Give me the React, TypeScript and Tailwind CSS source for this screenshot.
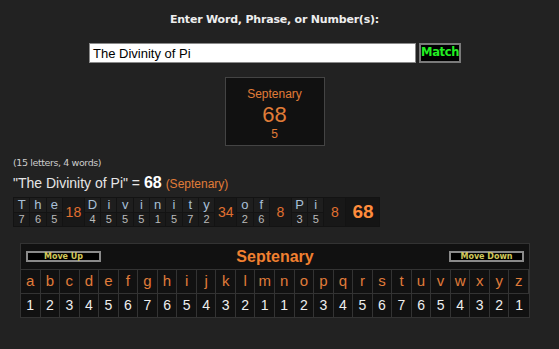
const breakdown: (string | [string, number])[] = [
  ['T', 7], ['h', 6], ['e', 5], '18',
  ['D', 4], ['i', 5], ['v', 5], ['i', 5], ['n', 1], ['i', 5], ['t', 7], ['y', 2], '34',
  ['o', 2], ['f', 6], '8',
  ['P', 3], ['i', 5], '8',
];

const alphabet = 'abcdefghijklmnopqrstuvwxyz'.split('');
const values = [1, 2, 3, 4, 5, 6, 7, 6, 5, 4, 3, 2, 1, 1, 2, 3, 4, 5, 6, 7, 6, 5, 4, 3, 2, 1];

export default function App() {
  return (
    <div className="w-[559px] h-[349px] bg-[#222222] overflow-hidden font-['Liberation_Sans',Arial,sans-serif]">
      {/* search form */}
      <div className="pt-[13px] pr-[10px] flex justify-center">
        <h1 className="font-['DejaVu_Sans',sans-serif] font-bold text-[11px] leading-[14px] text-[#eeeeee] tracking-[-0.2px]">
          Enter Word, Phrase, or Number(s):
        </h1>
      </div>
      <div className="mt-[16px] pr-[9px] flex justify-center items-center gap-[3px]">
        <div className="w-[327px] h-[20px] bg-white border border-[#8a8a8a] flex items-center pl-[3px] text-[13px] leading-none text-black">
          The Divinity of Pi
        </div>
        <button className="w-[42px] h-[20px] bg-black border-2 border-[#7a7a7a] text-[#22ee22] font-['DejaVu_Sans',sans-serif] font-bold text-[11.5px] leading-none tracking-[-0.3px]">
          Match
        </button>
      </div>

      {/* cipher result box */}
      <div className="mt-[14px] flex justify-center pr-[10px]">
        <div className="w-[100px] h-[69px] bg-[#111111] border border-[#444444] flex flex-col items-center pt-[9px] text-[#e07c38]">
          <div className="text-[12px] leading-[14px]">Septenary</div>
          <div className="text-[22px] leading-[24px] mt-[2px]">68</div>
          <div className="text-[12px] leading-[14px]">5</div>
        </div>
      </div>

      {/* results */}
      <div className="pl-[13px] mt-[11px]">
        <div className="text-[9.5px] leading-[12px] text-[#cccccc] font-['DejaVu_Sans',sans-serif] tracking-[-0.4px]">
          (15 letters, 4 words)
        </div>
        <div className="mt-[5px] text-[14px] leading-[18px] text-[#e6e6e6]">
          "The Divinity of Pi" = <b className="text-white text-[16px]">68</b>{' '}
          <span className="text-[12px] text-[#e07c38]">(Septenary)</span>
        </div>
        <div className="mt-[4px] flex h-[30px] w-fit bg-[#131313] gap-px p-px">
          {breakdown.map((c, i) =>
            typeof c === 'string' ? (
              <div key={i} className="w-[21px] bg-[#181818] flex items-center justify-center text-[14px] text-[#e07030]">
                {c}
              </div>
            ) : (
              <div key={i} className="w-[15.3px] flex flex-col gap-px">
                <div className="flex-1 bg-[#1e1e1e] flex items-center justify-center text-[13px] leading-none text-[#a9c0d8]">
                  {c[0]}
                </div>
                <div className="flex-1 bg-[#1a1a1a] flex items-center justify-center text-[11px] leading-none text-[#bbbbbb]">
                  {c[1]}
                </div>
              </div>
            )
          )}
          <div className="w-[33px] bg-[#151515] flex items-center justify-center text-[19px] font-bold text-[#ff8c3c]">
            68
          </div>
        </div>
      </div>

      {/* cipher chart */}
      <div className="mt-[16px] ml-[20px] w-[510px] border border-[#333333] bg-[#111111]">
        <div className="h-[26px] flex items-center justify-between px-[5px] border-b border-[#333333]">
          <button className="w-[75px] h-[11px] bg-black border-2 border-[#8a8a8a] text-[#d2c85a] font-['DejaVu_Sans',sans-serif] font-bold text-[8px] leading-none">
            Move Up
          </button>
          <div className="text-[16px] font-bold text-[#f08030]">Septenary</div>
          <button className="w-[75px] h-[11px] bg-black border-2 border-[#8a8a8a] text-[#d2c85a] font-['DejaVu_Sans',sans-serif] font-bold text-[8px] leading-none">
            Move Down
          </button>
        </div>
        <div className="grid grid-cols-26">
          {alphabet.map((a) => (
            <div key={a} className="h-[24px] border-r border-b border-[#333333] last:border-r-0 flex items-center justify-center text-[15px] text-[#e07c3a]">
              {a}
            </div>
          ))}
          {values.map((v, i) => (
            <div key={i} className="h-[23px] border-r border-[#333333] last:border-r-0 flex items-center justify-center text-[14px] text-[#eeeeee]">
              {v}
            </div>
          ))}
        </div>
      </div>
    </div>
  );
}
